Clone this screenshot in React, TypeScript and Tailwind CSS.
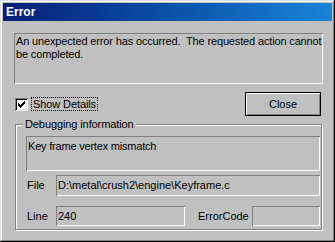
import React from "react";

const sunken = "shadow-[inset_1px_1px_0_#808080,inset_-1px_-1px_0_#ffffff]";

export default function App() {
  return (
    <div
      className="w-[335px] h-[242px] bg-[#c0c0c0] p-[3px] text-black text-[11px] leading-[13px] shadow-[inset_-1px_-1px_0_#000000,inset_1px_1px_0_#dfdfdf,inset_-2px_-2px_0_#808080,inset_2px_2px_0_#ffffff]"
      style={{ fontFamily: "'Liberation Sans', Arial, sans-serif" }}
    >
      <div className="h-[18px] bg-gradient-to-r from-[#0a1c78] to-[#1a84d8] text-white font-bold text-[12px] pl-[3px] flex items-center">
        Error
      </div>
      <div className="pl-[11px]">
        <div className={`mt-[12px] w-[309px] h-[51px] overflow-hidden pl-[2px] pt-[2px] ${sunken}`}>
          <p className="whitespace-pre tracking-[-0.15px]">
            {"An unexpected error has occurred.  The requested action cannot\nbe completed."}
          </p>
        </div>
        <div className="mt-[8px] h-[24px] flex items-center justify-between w-[307px]">
          <div className="flex items-center ml-[1px]">
            <div className="w-[13px] h-[13px] bg-white shadow-[inset_1px_1px_0_#808080,inset_-1px_-1px_0_#ffffff,inset_2px_2px_0_#000000,inset_-2px_-2px_0_#dfdfdf] flex items-center justify-center">
              <svg width="7" height="7" viewBox="0 0 7 7" shapeRendering="crispEdges">
                <path d="M6 0h1v3h-1zM5 1h1v3h-1zM4 2h1v3h-1zM3 3h1v3h-1zM2 4h1v3h-1zM1 3h1v3h-1zM0 2h1v3h-1z" fill="#000" />
              </svg>
            </div>
            <span className="ml-[3px] px-[1px] border border-dotted border-black leading-[12px] tracking-[-0.1px]">Show Details</span>
          </div>
          <button className="w-[76px] h-[24px] bg-[#c0c0c0] border border-black shadow-[inset_1px_1px_0_#ffffff,inset_-1px_-1px_0_#808080] flex items-center justify-center text-[11px]">
            Close
          </button>
        </div>
        <div className="relative mt-[8px] ml-[1px] w-[307px] h-[106px] border border-[#808080] shadow-[1px_1px_0_#ffffff,inset_1px_1px_0_#ffffff] pl-[10px] pt-[11px]">
          <span className="absolute left-[7px] top-[-7px] bg-[#c0c0c0] px-[2px] tracking-[-0.1px]">Debugging information</span>
          <div className={`w-[294px] h-[35px] pl-[2px] pt-[4px] ${sunken}`}>
            <span className="tracking-[-0.2px]">Key frame vertex mismatch</span>
          </div>
          <div className="mt-[4px] flex items-center h-[21px]">
            <span className="w-[30px] pl-[1px]">File</span>
            <div className={`w-[264px] h-[21px] pl-[2px] flex items-center ${sunken}`}>
              D:\metal\crush2\engine\Keyframe.c
            </div>
          </div>
          <div className="mt-[10px] flex items-center h-[20px]">
            <span className="w-[30px] pl-[1px]">Line</span>
            <div className={`w-[129px] h-[20px] pl-[2px] flex items-center ${sunken}`}>240</div>
            <span className="ml-[13px] w-[54px]">ErrorCode</span>
            <div className={`w-[68px] h-[20px] ${sunken}`} />
          </div>
        </div>
      </div>
    </div>
  );
}
